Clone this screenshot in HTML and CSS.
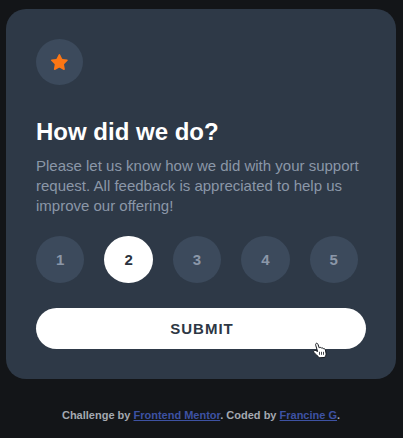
FILE: index.html
```
<!DOCTYPE html>
<html lang="en">
<head>
<meta charset="utf-8">
<title>Interactive rating component</title>
<link rel="stylesheet" href="styles.css">
</head>
<body>
<main class="card">
  <div class="badge">
    <svg class="star" width="17" height="16" viewBox="0 0 17 16"><path d="m9.067.43 1.99 4.031c.112.228.33.386.58.422l4.45.647a.772.772 0 0 1 .427 1.316l-3.22 3.138a.773.773 0 0 0-.222.683l.76 4.431a.772.772 0 0 1-1.12.813l-3.98-2.092a.773.773 0 0 0-.718 0l-3.98 2.092a.772.772 0 0 1-1.119-.813l.76-4.431a.77.77 0 0 0-.222-.683L.233 6.846A.772.772 0 0 1 .661 5.53l4.449-.647a.772.772 0 0 0 .58-.422L7.68.43a.774.774 0 0 1 1.387 0Z"/></svg>
  </div>
  <h1 class="title">How did we do?</h1>
  <p class="text">Please let us know how we did with your support request. All feedback is appreciated to help us improve our offering!</p>
  <div class="ratings">
    <button class="rating">1</button>
    <button class="rating selected">2</button>
    <button class="rating">3</button>
    <button class="rating">4</button>
    <button class="rating">5</button>
  </div>
  <button class="submit">SUBMIT</button>
</main>
<footer class="attribution">Challenge by <a href="#">Frontend Mentor</a>. Coded by <a href="#">Francine G</a>.</footer>
<svg class="pointer" width="15" height="17" viewBox="0 0 15 17">
  <path class="hand" d="M5.600 9.500L3.700 3.200C3.100 1.100 5.400.5 6 2.400l1.200 3.500c.6-.8 1.700-.7 2.100.2.700-.5 1.700-.3 2 .6.900-.3 1.900.2 2.100 1.300l.6 3.200c.3 1.800-.7 2.600-1 4.200L7.100 15.800c-.6-1.800-3.800-3.100-5.300-5.600-.9-1.600 1.100-2.400 2.200-1.500z"/>
  <path class="lines" d="M7.500 9.800v3M9.500 9.800v3M11.500 9.800v3"/>
</svg>
</body>
</html>
```
FILE: styles.css
```
* {
  box-sizing: border-box;
}

body {
  margin: 0;
  height: 438px;
  padding: 9px 7px 0 6px;
  overflow: hidden;
  background: #131518;
  font-family: "Liberation Sans", Arial, sans-serif;
  font-size: 15px;
}

.card {
  height: 370px;
  padding: 30px;
  border-radius: 20px;
  background: #2e3947;
}

.badge {
  display: flex;
  align-items: center;
  justify-content: center;
  width: 47px;
  height: 46px;
  border-radius: 50%;
  background: #3c4a5c;
}

.star {
  fill: #fc7614;
}

.title {
  margin: 33px 0 10px;
  color: #fff;
  font-size: 24px;
  line-height: 28px;
}

.text {
  margin: 0;
  color: #8b97a8;
  line-height: 20px;
}

.ratings {
  display: flex;
  gap: 20px;
  margin-top: 20px;
}

.rating {
  width: 48.4px;
  height: 47px;
  padding: 0;
  border: 0;
  border-radius: 50%;
  background: #3c4a5c;
  color: #8b97a8;
  font: bold 15px "Liberation Sans", Arial, sans-serif;
}

.rating.selected {
  background: #fff;
  color: #2b333e;
}

.submit {
  display: block;
  width: 100%;
  height: 41px;
  margin-top: 25px;
  padding: 0 0 0 2px;
  border: 0;
  border-radius: 21px;
  background: #fff;
  color: #2d3744;
  font: bold 15px "Liberation Sans", Arial, sans-serif;
  letter-spacing: 1px;
}

.attribution {
  margin-top: 30px;
  color: #a4a9b1;
  font-size: 11px;
  font-weight: bold;
  line-height: 13px;
  text-align: center;
}

.attribution a {
  color: #3e52a3;
}

.pointer {
  position: absolute;
  left: 312px;
  top: 342px;
}

.hand {
  fill: #fff;
  stroke: #15191e;
}

.lines {
  fill: none;
  stroke: #15191e;
  stroke-width: 0.8;
}
```
